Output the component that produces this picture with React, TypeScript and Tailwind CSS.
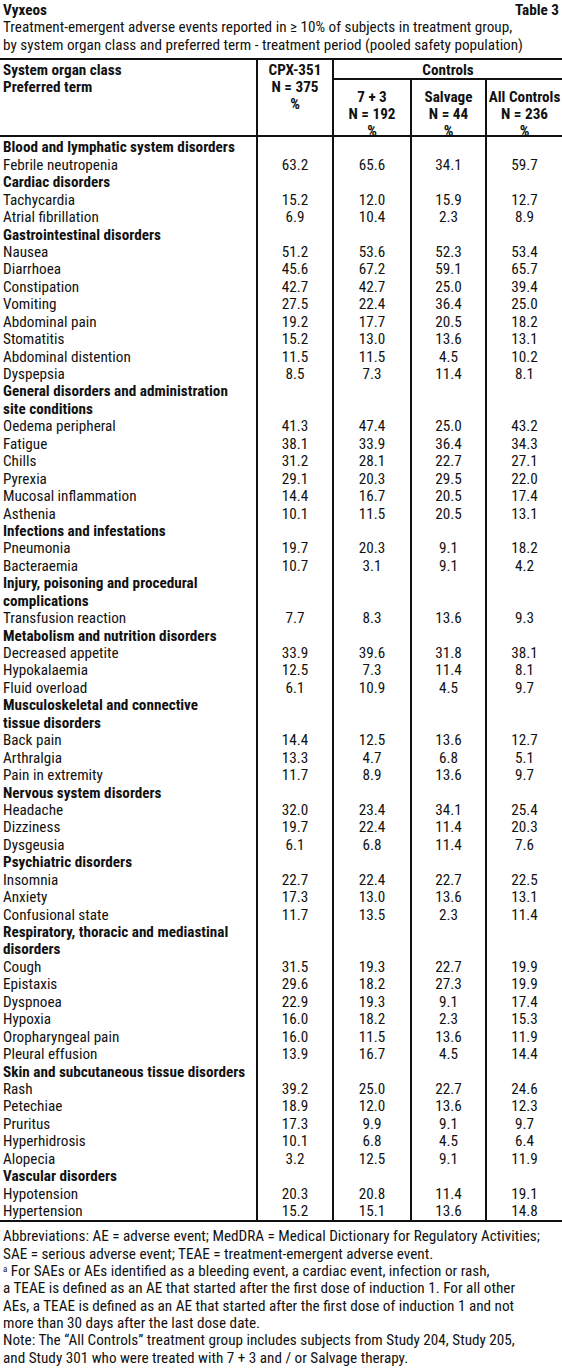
type Row = { term: string; v?: [string, string, string, string]; cat?: boolean }

const c = (term: string): Row => ({ term, cat: true })
const r = (term: string, a: string, b: string, d: string, e: string): Row => ({ term, v: [a, b, d, e] })

const rows: Row[] = [
  c("Blood and lymphatic system disorders"),
  r("Febrile neutropenia", "63.2", "65.6", "34.1", "59.7"),
  c("Cardiac disorders"),
  r("Tachycardia", "15.2", "12.0", "15.9", "12.7"),
  r("Atrial fibrillation", "6.9", "10.4", "2.3", "8.9"),
  c("Gastrointestinal disorders"),
  r("Nausea", "51.2", "53.6", "52.3", "53.4"),
  r("Diarrhoea", "45.6", "67.2", "59.1", "65.7"),
  r("Constipation", "42.7", "42.7", "25.0", "39.4"),
  r("Vomiting", "27.5", "22.4", "36.4", "25.0"),
  r("Abdominal pain", "19.2", "17.7", "20.5", "18.2"),
  r("Stomatitis", "15.2", "13.0", "13.6", "13.1"),
  r("Abdominal distention", "11.5", "11.5", "4.5", "10.2"),
  r("Dyspepsia", "8.5", "7.3", "11.4", "8.1"),
  c("General disorders and administration"),
  c("site conditions"),
  r("Oedema peripheral", "41.3", "47.4", "25.0", "43.2"),
  r("Fatigue", "38.1", "33.9", "36.4", "34.3"),
  r("Chills", "31.2", "28.1", "22.7", "27.1"),
  r("Pyrexia", "29.1", "20.3", "29.5", "22.0"),
  r("Mucosal inflammation", "14.4", "16.7", "20.5", "17.4"),
  r("Asthenia", "10.1", "11.5", "20.5", "13.1"),
  c("Infections and infestations"),
  r("Pneumonia", "19.7", "20.3", "9.1", "18.2"),
  r("Bacteraemia", "10.7", "3.1", "9.1", "4.2"),
  c("Injury, poisoning and procedural"),
  c("complications"),
  r("Transfusion reaction", "7.7", "8.3", "13.6", "9.3"),
  c("Metabolism and nutrition disorders"),
  r("Decreased appetite", "33.9", "39.6", "31.8", "38.1"),
  r("Hypokalaemia", "12.5", "7.3", "11.4", "8.1"),
  r("Fluid overload", "6.1", "10.9", "4.5", "9.7"),
  c("Musculoskeletal and connective"),
  c("tissue disorders"),
  r("Back pain", "14.4", "12.5", "13.6", "12.7"),
  r("Arthralgia", "13.3", "4.7", "6.8", "5.1"),
  r("Pain in extremity", "11.7", "8.9", "13.6", "9.7"),
  c("Nervous system disorders"),
  r("Headache", "32.0", "23.4", "34.1", "25.4"),
  r("Dizziness", "19.7", "22.4", "11.4", "20.3"),
  r("Dysgeusia", "6.1", "6.8", "11.4", "7.6"),
  c("Psychiatric disorders"),
  r("Insomnia", "22.7", "22.4", "22.7", "22.5"),
  r("Anxiety", "17.3", "13.0", "13.6", "13.1"),
  r("Confusional state", "11.7", "13.5", "2.3", "11.4"),
  c("Respiratory, thoracic and mediastinal"),
  c("disorders"),
  r("Cough", "31.5", "19.3", "22.7", "19.9"),
  r("Epistaxis", "29.6", "18.2", "27.3", "19.9"),
  r("Dyspnoea", "22.9", "19.3", "9.1", "17.4"),
  r("Hypoxia", "16.0", "18.2", "2.3", "15.3"),
  r("Oropharyngeal pain", "16.0", "11.5", "13.6", "11.9"),
  r("Pleural effusion", "13.9", "16.7", "4.5", "14.4"),
  c("Skin and subcutaneous tissue disorders"),
  r("Rash", "39.2", "25.0", "22.7", "24.6"),
  r("Petechiae", "18.9", "12.0", "13.6", "12.3"),
  r("Pruritus", "17.3", "9.9", "9.1", "9.7"),
  r("Hyperhidrosis", "10.1", "6.8", "4.5", "6.4"),
  r("Alopecia", "3.2", "12.5", "9.1", "11.9"),
  c("Vascular disorders"),
  r("Hypotension", "20.3", "20.8", "11.4", "19.1"),
  r("Hypertension", "15.2", "15.1", "13.6", "14.8"),
]

const footer = [
  "Abbreviations: AE = adverse event; MedDRA = Medical Dictionary for Regulatory Activities;",
  "SAE = serious adverse event; TEAE = treatment-emergent adverse event.",
  "a For SAEs or AEs identified as a bleeding event, a cardiac event, infection or rash,",
  "a TEAE is defined as an AE that started after the first dose of induction 1. For all other",
  "AEs, a TEAE is defined as an AE that started after the first dose of induction 1 and not",
  "more than 30 days after the last dose date.",
  "Note: The \u201cAll Controls\u201d treatment group includes subjects from Study 204, Study 205,",
  "and Study 301 who were treated with 7 + 3 and / or Salvage therapy.",
]

function SubHead({ name, n }: { name: string; n: string }) {
  return (
    <th className="h-[57px] border-b-2 border-l-2 border-[#111] p-0 text-center align-top whitespace-nowrap">
      <div className="h-[55px] pt-[9px]">
        {name}
        <br />
        {n}
        <br />%
      </div>
    </th>
  )
}

export default function App() {
  return (
    <div className="w-[562px] bg-white text-[#111] font-['Roboto_Condensed',Roboto,sans-serif] font-stretch-[75%] text-[15.2px] leading-[17.44px]">
      <div className="px-[3px] pt-[2px] pb-[4px]">
        <div className="flex justify-between font-bold">
          <span>Vyxeos</span>
          <span>Table 3</span>
        </div>
        <div className="whitespace-nowrap">
          Treatment-emergent adverse events reported in ≥ 10% of subjects in treatment group,
        </div>
        <div className="whitespace-nowrap">
          by system organ class and preferred term - treatment period (pooled safety population)
        </div>
      </div>

      <table className="w-full table-fixed border-collapse border-y-2 border-[#111]">
        <colgroup>
          <col className="w-[257px]" />
          <col className="w-[76px]" />
          <col className="w-[78px]" />
          <col className="w-[75px]" />
          <col className="w-[76px]" />
        </colgroup>
        <thead className="font-bold leading-[17px]">
          <tr>
            <th rowSpan={2} className="border-b-2 border-[#111] px-[3px] pt-[2px] text-left align-top">
              System organ class
              <br />
              Preferred term
            </th>
            <th rowSpan={2} className="border-b-2 border-l-2 border-[#111] pt-[2px] text-center align-top">
              CPX-351
              <br />
              N = 375
              <br />%
            </th>
            <th colSpan={3} className="h-[20px] border-b-2 border-l-2 border-[#111] p-0 text-center align-top">
              <div className="h-[18px] pt-[2px]">Controls</div>
            </th>
          </tr>
          <tr>
            <SubHead name="7 + 3" n="N = 192" />
            <SubHead name="Salvage" n="N = 44" />
            <SubHead name="All Controls" n="N = 236" />
          </tr>
        </thead>
        <tbody>
          {rows.map((row, i) => (
            <tr key={i}>
              <td className={`px-[3px] whitespace-nowrap ${row.cat ? "font-bold" : ""} ${i === 0 ? "pt-[2px]" : ""}`}>
                {row.term}
              </td>
              {[0, 1, 2, 3].map((k) => (
                <td key={k} className="border-l-2 border-[#111] text-center">
                  {row.v ? row.v[k] : ""}
                </td>
              ))}
            </tr>
          ))}
        </tbody>
      </table>

      <div className="px-[3px] pt-[6px] leading-[17.3px]">
        {footer.map((line, i) => (
          <div key={i} className="whitespace-nowrap">
            {i === 2 ? (
              <>
                <sup className="text-[9px]">a</sup>
                {line.slice(1)}
              </>
            ) : (
              line
            )}
          </div>
        ))}
      </div>
    </div>
  )
}
